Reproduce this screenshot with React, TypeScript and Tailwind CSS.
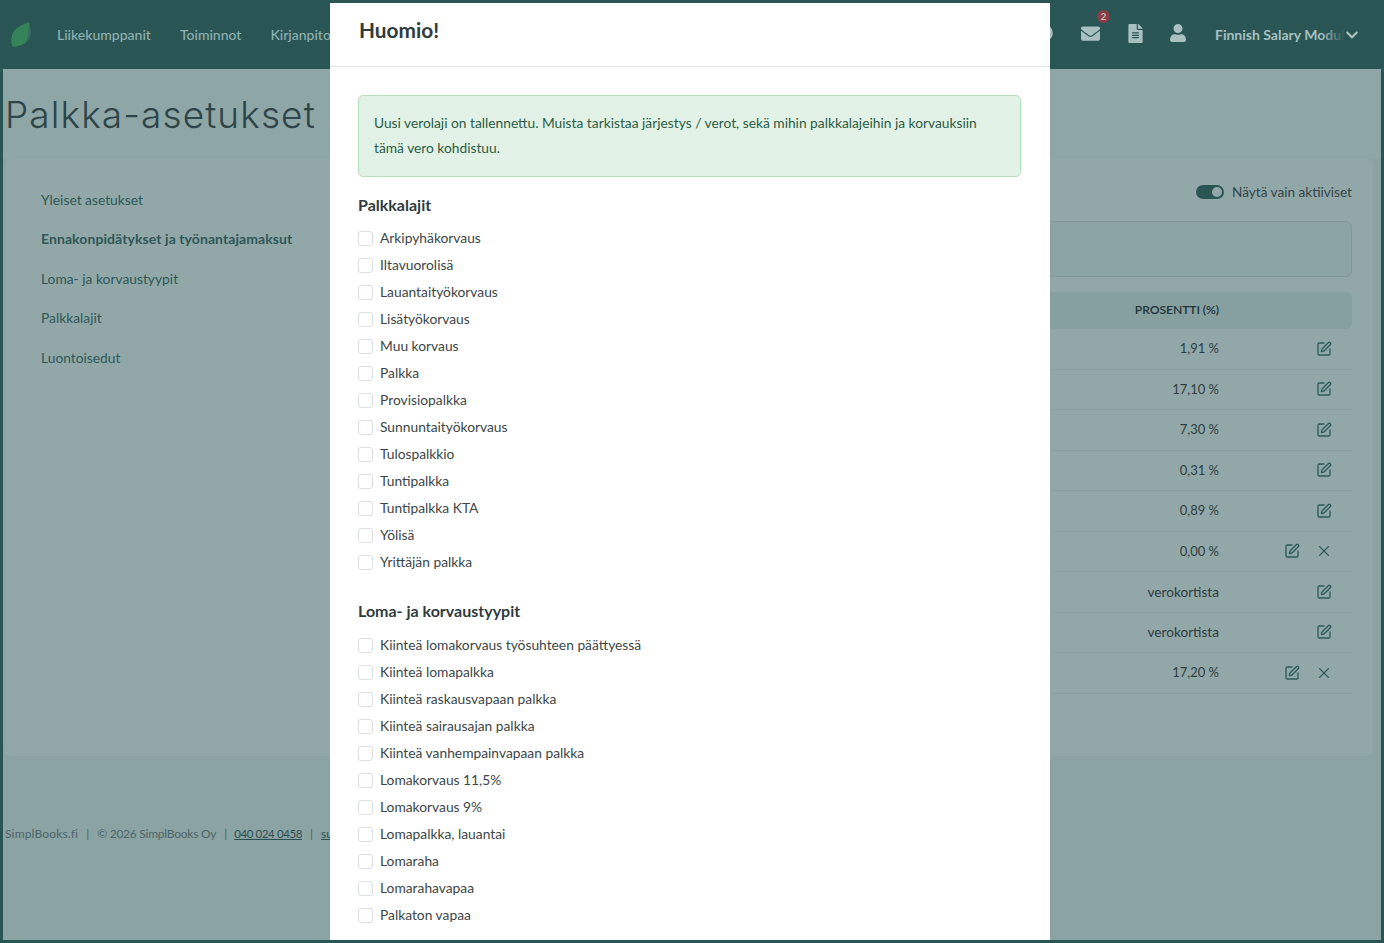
import { FaEnvelope, FaFileAlt, FaUser, FaChevronDown, FaQuestionCircle } from "react-icons/fa";
import { SquarePen, X } from "lucide-react";

const sideLinks = ["Yleiset asetukset", "Ennakonpidätykset ja työnantajamaksut", "Loma- ja korvaustyypit", "Palkkalajit", "Luontoisedut"];

const rows = [
  { value: "1,91 %", remove: false },
  { value: "17,10 %", remove: false },
  { value: "7,30 %", remove: false },
  { value: "0,31 %", remove: false },
  { value: "0,89 %", remove: false },
  { value: "0,00 %", remove: true },
  { value: "verokortista", remove: false },
  { value: "verokortista", remove: false },
  { value: "17,20 %", remove: true },
];

const wageTypes = ["Arkipyhäkorvaus", "Iltavuorolisä", "Lauantaityökorvaus", "Lisätyökorvaus", "Muu korvaus", "Palkka", "Provisiopalkka", "Sunnuntaityökorvaus", "Tulospalkkio", "Tuntipalkka", "Tuntipalkka KTA", "Yölisä", "Yrittäjän palkka"];

const leaveTypes = ["Kiinteä lomakorvaus työsuhteen päättyessä", "Kiinteä lomapalkka", "Kiinteä raskausvapaan palkka", "Kiinteä sairausajan palkka", "Kiinteä vanhempainvapaan palkka", "Lomakorvaus 11,5%", "Lomakorvaus 9%", "Lomapalkka, lauantai", "Lomaraha", "Lomarahavapaa", "Palkaton vapaa"];

function CheckList({ items }: { items: string[] }) {
  return (
    <div className="flex flex-col">
      {items.map((item) => (
        <label key={item} className="flex h-[27px] items-center gap-[7px] text-[13.8px] text-[#3c4648]">
          <span className="h-[15px] w-[15px] rounded-[3px] border border-[#dcdfe3] bg-white" />
          {item}
        </label>
      ))}
    </div>
  );
}

export default function App() {
  return (
    <div className="relative flex h-[943px] w-[1384px] flex-col overflow-hidden bg-[#2a5555] font-['Lato',sans-serif]">
      <header className="flex h-[69px] shrink-0 items-center pl-[11px] pr-[25px] text-[14px] text-[#8fb0b0]">
        <svg width="20" height="26" viewBox="0 0 20 26" className="shrink-0">
          <path d="M18 0 C19 4 20 9 19 14 C18 20 11 24 2 25 C-1 20 0 12 4 8 C8 4 13 2 18 0 Z" fill="#34845a" />
          <path d="M18 0 C20 5 20 10 19 14 C18 18 16 20 14 22 C17 16 18 8 18 0 Z" fill="#3c6666" />
        </svg>
        <nav className="ml-[26px] flex gap-[29px] font-medium">
          <span>Liikekumppanit</span>
          <span>Toiminnot</span>
          <span>Kirjanpito</span>
        </nav>
        <div className="ml-auto flex items-center text-[#a9c0c0]">
          <FaQuestionCircle className="mb-[3px] mr-[28px] h-[18px] w-[18px]" />
          <span className="relative mb-[3px] mr-[28px]">
            <FaEnvelope className="h-[19px] w-[19px]" />
            <span className="absolute -right-[10px] -top-[14px] flex h-[13px] w-[13px] items-center justify-center rounded-full bg-[#8a3c44] text-[10px] font-bold leading-none text-[#c9b8b8]">2</span>
          </span>
          <FaFileAlt className="mb-[3px] mr-[26px] h-[19px] w-[15px]" />
          <FaUser className="mb-[3px] mr-[28px] h-[18px] w-[18px]" />
          <span className="relative w-[130px] overflow-hidden whitespace-nowrap font-bold">
            Finnish Salary Module
            <span className="absolute inset-y-0 right-0 w-[24px] bg-gradient-to-r from-transparent to-[#2a5555]" />
          </span>
          <FaChevronDown className="h-[14px] w-[14px]" />
        </div>
      </header>

      <main className="mx-[3px] mb-[3px] flex min-h-0 flex-1 flex-col bg-[#8ba3a3]">
        <div className="h-[90px] shrink-0 bg-[#8fa6a6] pl-[2px] pt-[21px]">
          <h1 className="font-['Inter',sans-serif] text-[37px] font-light leading-[50px] tracking-[1.1px] text-[#2d4548]">Palkka-asetukset</h1>
        </div>
        <section className="ml-[2px] mr-[8px] flex h-[597px] shrink-0 rounded-[6px] bg-[#92a8a8] text-[13.8px]">
          <aside className="flex w-[325px] shrink-0 flex-col pl-[36px] pt-[30.7px] text-[#2f5757]">
            {sideLinks.map((link, i) => (
              <span key={link} className={`h-[39.5px] leading-[19px] ${i === 1 ? "text-[14px] font-bold tracking-[0.08px]" : ""}`}>{link}</span>
            ))}
          </aside>
          <div className="flex min-w-0 flex-1 flex-col pr-[21px] text-[#2f3d40]">
            <div className="mt-[24px] flex h-[18px] items-center justify-end gap-[8px]">
              <span className="flex h-[14px] w-[28px] items-center justify-end rounded-full bg-[#2a5555] pr-[2px]">
                <span className="h-[10px] w-[10px] rounded-full bg-[#92a8a8]" />
              </span>
              <span className="text-[13.6px] text-[#324548]">Näytä vain aktiiviset</span>
            </div>
            <div className="mt-[20px] h-[56px] rounded-[6px] border border-[#7f9898] bg-[#8ba3a3]" />
            <div className="mt-[15px] flex h-[37px] items-center justify-end rounded-[6px] bg-[#86a0a0] pb-[1px] pr-[133px] text-[12.2px] font-semibold tracking-[-0.1px] text-[#22343a]">PROSENTTI (%)</div>
            <div className="flex flex-col">
              {rows.map((row, i) => (
                <div key={i} className="flex h-[40.5px] items-center justify-end border-b border-[#87a0a0]">
                  <span className={`mr-[63px] ${row.value.endsWith("%") ? "text-[13px]" : "text-[13.6px]"}`}>{row.value}</span>
                  <span className="flex w-[70px] items-center justify-end gap-[15px] pr-[19px] text-[#2d5a5a]">
                    {row.remove && <SquarePen size={16} strokeWidth={2} />}
                    {row.remove ? <X size={18} strokeWidth={1.5} /> : <SquarePen size={16} strokeWidth={2} className="mr-[1px]" />}
                  </span>
                </div>
              ))}
            </div>
          </div>
        </section>
        <footer className="flex flex-1 items-center gap-[8px] whitespace-nowrap pb-[28px] pl-[2px] text-[12px] text-[#4b6568]">
          <span className="tracking-[0.15px]">SimplBooks.fi</span>
          <span>|</span>
          <span className="tracking-[-0.25px]">© 2026 SimplBooks Oy</span>
          <span>|</span>
          <span className="-ml-[1px] text-[11.5px] tracking-[-0.4px] text-[#2a4f52] underline">040 024 0458</span>
          <span>|</span>
          <span className="text-[#2a4f52] underline">support@simplbooks.fi</span>
        </footer>
      </main>

      <div className="absolute bottom-[3px] left-[330px] top-[3px] w-[720px] overflow-hidden bg-white">
        <div className="flex h-[64px] items-center border-b border-[#e3e3ec] pb-[9px] pl-[29px] text-[20.8px] font-bold text-[#2f3b3d]">Huomio!</div>
        <div className="pl-[28px] pr-[29px] pt-[28px]">
          <div className="rounded-[5px] border border-[#b4e0bb] bg-[#e3f2e6] px-[15px] pb-[16px] pt-[14px] text-[13.77px] leading-[25px] text-[#2b5c44]">
            Uusi verolaji on tallennettu. Muista tarkistaa järjestys / verot, sekä mihin palkkalajeihin ja korvauksiin
            <br />
            tämä vero kohdistuu.
          </div>
          <h3 className="mb-[9px] mt-[17px] text-[16px] font-bold leading-[22px] text-[#2f3b3d]">Palkkalajit</h3>
          <CheckList items={wageTypes} />
          <h3 className="mb-[10px] mt-[24px] text-[16px] font-bold leading-[22px] text-[#2f3b3d]">Loma- ja korvaustyypit</h3>
          <CheckList items={leaveTypes} />
        </div>
      </div>
    </div>
  );
}
